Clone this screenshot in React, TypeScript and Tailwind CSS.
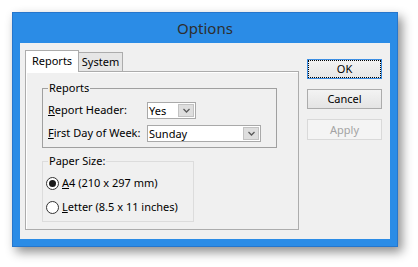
const font = { fontFamily: '"Noto Sans", "DejaVu Sans", sans-serif' };

type ComboProps = {
  value: string;
  width: string;
};

function Combo({ value, width }: ComboProps) {
  return (
    <div className={`${width} h-[17px] flex border border-[#a9a9a9] bg-white`}>
      <span className="flex-1 pl-[1px] leading-[15px] text-black">{value}</span>
      <span className="w-[16px] m-px border border-[#c2c2c2] bg-[#dedede] flex items-center justify-center">
        <svg width="7" height="5" viewBox="0 0 7 5">
          <polyline points="0.5,1 3.5,4 6.5,1" fill="none" stroke="#5a5a5a" strokeWidth="1.3" />
        </svg>
      </span>
    </div>
  );
}

type RadioProps = {
  checked?: boolean;
  mnemonic: string;
  rest: string;
};

function Radio({ checked, mnemonic, rest }: RadioProps) {
  return (
    <div className="h-[16px] flex items-center -ml-[2px]">
      <span className="w-[13px] h-[13px] rounded-full border border-[#333] bg-white flex items-center justify-center">
        {checked && <span className="w-[7px] h-[7px] rounded-full bg-[#1a1a1a]" />}
      </span>
      <span className="ml-[3px] text-black">
        <span className="underline">{mnemonic}</span>
        {rest}
      </span>
    </div>
  );
}

function Button({ label, variant }: { label: string; variant?: "focus" | "disabled" }) {
  if (variant === "focus") {
    return (
      <button className="w-[75px] h-[20px] border border-[#3c8ee3] bg-gradient-to-b from-[#f3f3f3] to-[#e6e6e6] text-black outline-1 outline-dotted outline-black -outline-offset-2 leading-[16px]">
        {label}
      </button>
    );
  }
  if (variant === "disabled") {
    return (
      <button className="w-[75px] h-[21px] border border-[#d9d9d9] bg-[#f4f4f4] text-[#a3a3a3] leading-[17px]">
        {label}
      </button>
    );
  }
  return (
    <button className="w-[75px] h-[20px] border border-[#acacac] bg-gradient-to-b from-[#f3f3f3] to-[#e4e4e4] text-black leading-[16px]">
      {label}
    </button>
  );
}

export default function App() {
  return (
    <div className="w-[418px] h-[267px] bg-white overflow-hidden text-[11px]" style={font}>
      <div className="ml-[12px] mt-[12px] w-[386px] h-[235px] bg-[#2b8ce6] border border-[#2676cc] flex flex-col px-[7px] pb-[7px] shadow-[4px_5px_10px_rgba(0,0,0,0.45)]">
        <div className="h-[30px] flex items-center justify-center text-[15px] text-[#2e2e2e] pt-[1px]">Options</div>

        <div className="flex-1 bg-[#f0f0f0] flex pl-[5px] pt-[7px]">
          <div className="w-[274px]">
            <div className="flex items-end h-[21px]">
              <div className="w-[54px] h-[22px] -mb-px border border-b-0 border-[#acacac] bg-white relative z-10 flex items-center justify-center text-black">
                Reports
              </div>
              <div className="w-[45px] h-[19px] -ml-px border border-b-0 border-[#acacac] bg-[#e6e6e6] flex items-center justify-center text-black">
                System
              </div>
            </div>

            <div className="h-[159px] border border-[#acacac] bg-[#f0f0f0] shadow-[inset_1px_1px_0_#fff] pl-[16px] pt-[8px]">
              <fieldset className="w-[235px] border border-[#a0a0a0] pl-[5px] pr-[6px] pb-[5px]">
                <legend className="px-[1px] leading-[16px] text-black">Reports</legend>
                <div className="flex flex-col gap-[6px] mt-[6px]">
                  <div className="flex items-center h-[17px]">
                    <span className="w-[99px] text-black">
                      <span className="underline">R</span>eport Header:
                    </span>
                    <Combo value="Yes" width="w-[49px]" />
                  </div>
                  <div className="flex items-center h-[17px]">
                    <span className="w-[99px] text-black">
                      <span className="underline">F</span>irst Day of Week:
                    </span>
                    <Combo value="Sunday" width="w-[114px]" />
                  </div>
                </div>
              </fieldset>

              <fieldset className="w-[152px] mt-[5px] border border-[#dcdcdc] pl-[5px] pb-[6px]">
                <legend className="px-[1px] leading-[16px] text-black">Paper Size:</legend>
                <div className="flex flex-col gap-[8px] mt-[6px]">
                  <Radio checked mnemonic="A" rest="4 (210 x 297 mm)" />
                  <Radio mnemonic="L" rest="etter (8.5 x 11 inches)" />
                </div>
              </fieldset>
            </div>
          </div>

          <div className="ml-[8px] pt-[9px] flex flex-col gap-[10px]">
            <Button label="OK" variant="focus" />
            <Button label="Cancel" />
            <Button label="Apply" variant="disabled" />
          </div>
        </div>
      </div>
    </div>
  );
}
